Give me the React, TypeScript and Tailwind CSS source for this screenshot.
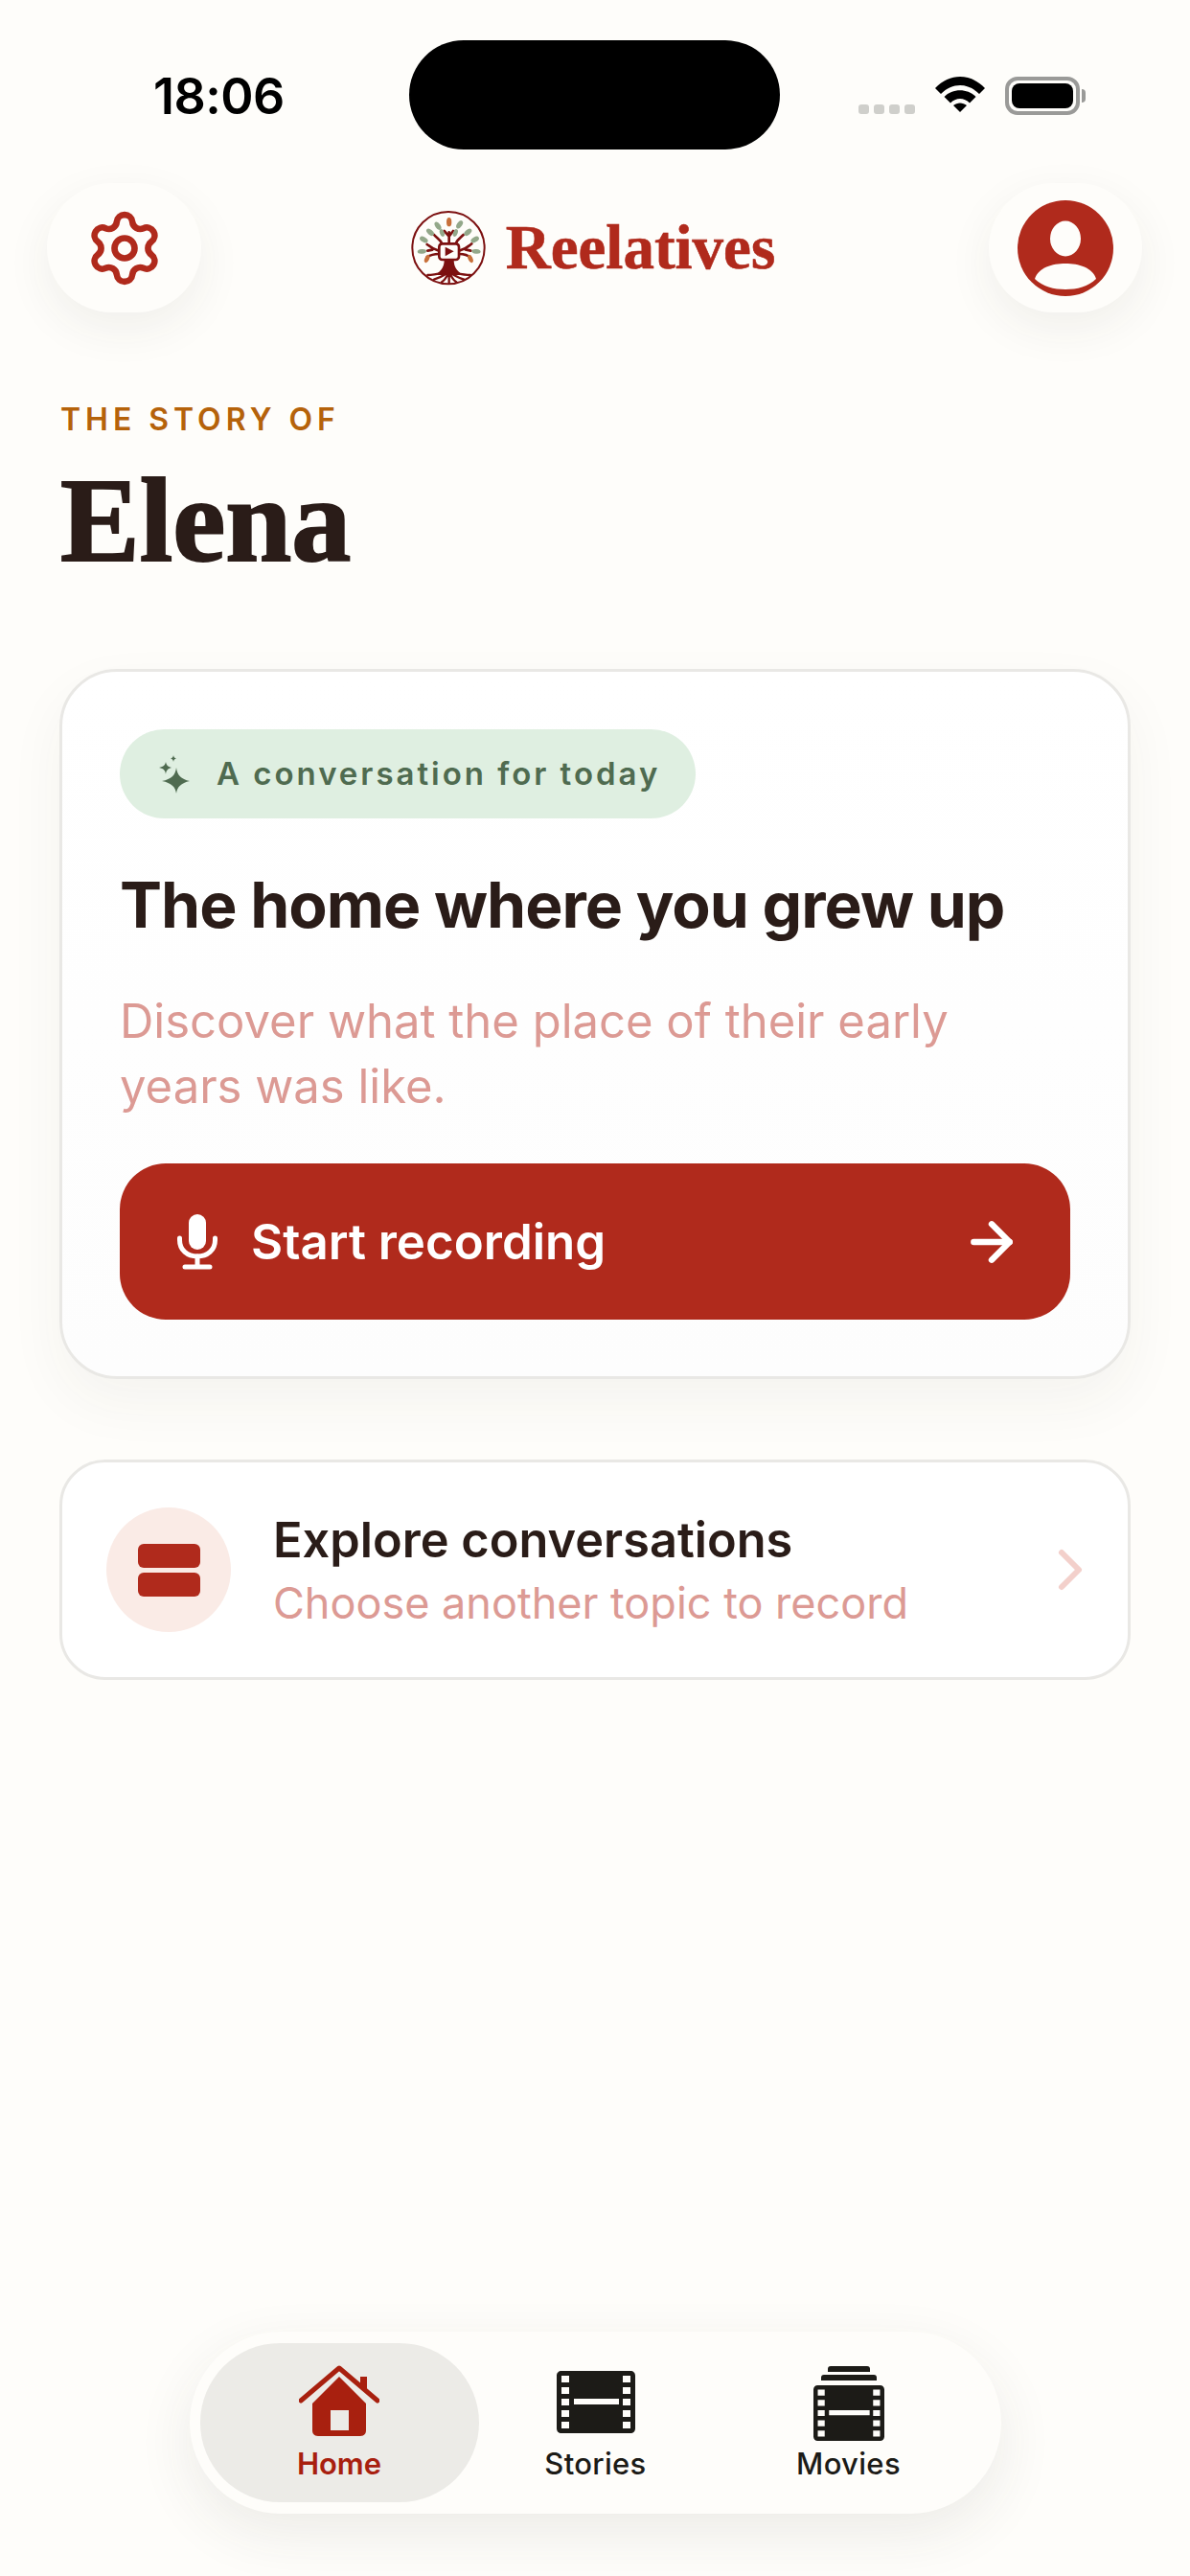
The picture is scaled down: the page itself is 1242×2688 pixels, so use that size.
import React from 'react';
import { ArrowRight, ChevronRight, Settings } from 'lucide-react';

const Logo = () => (
  <svg width="80" height="80" viewBox="25 22 240 240" fill="none">
    <circle cx="145" cy="141" r="113" stroke="#7c1010" strokeWidth="6" />
    {/* branches */}
    <g stroke="#7c1010" strokeWidth="8" strokeLinecap="round">
      <path d="M125 128 C120 115 108 110 100 100" />
      <path d="M168 128 C172 115 182 110 192 100" />
      <path d="M147 128 L147 92 M147 105 L132 88 M147 105 L160 88" />
      <path d="M115 150 C100 145 90 140 78 130 M115 160 C100 160 90 162 78 170 M95 147 L80 150" />
      <path d="M178 150 C195 145 205 140 218 128 M178 160 C195 160 205 162 214 172 M198 146 L215 150" />
    </g>
    <rect x="116" y="128" width="62" height="50" rx="10" fill="#fefdfa" stroke="#7c1010" strokeWidth="8" />
    <path d="M135 138 L135 167 L162 152 Z" fill="#7c1010" />
    {/* trunk and roots */}
    <path d="M132 178 L162 178 C162 200 170 212 190 226 L104 226 C124 212 132 200 132 178 Z" fill="#7c1010" />
    <g stroke="#7c1010" strokeWidth="7" strokeLinecap="round">
      <path d="M132 218 C115 222 100 226 80 226 M162 218 C180 222 195 226 214 226" />
      <path d="M138 222 C125 230 112 236 100 240 M156 222 C170 230 180 236 194 240" />
      <path d="M147 222 L147 250 M143 224 C138 234 132 244 124 248 M151 224 C156 234 162 244 170 248" />
    </g>
    {/* leaves */}
    <g fill="#93a88a">
      <ellipse cx="112" cy="72" rx="8" ry="14" transform="rotate(-35 112 72)" />
      <ellipse cx="180" cy="68" rx="8" ry="14" transform="rotate(35 180 68)" />
      <ellipse cx="88" cy="92" rx="8" ry="14" transform="rotate(-50 88 92)" />
      <ellipse cx="206" cy="92" rx="8" ry="14" transform="rotate(50 206 92)" />
      <ellipse cx="68" cy="115" rx="8" ry="14" transform="rotate(-60 68 115)" />
      <ellipse cx="228" cy="115" rx="8" ry="14" transform="rotate(60 228 115)" />
      <ellipse cx="62" cy="152" rx="7" ry="14" transform="rotate(85 62 152)" />
      <ellipse cx="232" cy="152" rx="7" ry="14" transform="rotate(-85 232 152)" />
      <ellipse cx="125" cy="94" rx="7" ry="12" transform="rotate(-20 125 94)" />
      <ellipse cx="167" cy="94" rx="7" ry="12" transform="rotate(20 167 94)" />
    </g>
    <g fill="#c8703a">
      <ellipse cx="147" cy="60" rx="8" ry="14" />
      <ellipse cx="78" cy="175" rx="7" ry="13" transform="rotate(25 78 175)" />
      <ellipse cx="214" cy="175" rx="7" ry="13" transform="rotate(-25 214 175)" />
    </g>
  </svg>
);

const Avatar = () => (
  <svg width="100" height="100" viewBox="0 0 100 100">
    <circle cx="50" cy="50" r="50" fill="#b02a1c" />
    <ellipse cx="50" cy="40" rx="16" ry="18.500" fill="#fefdfa" />
    <path d="M18 82 C22 70 36 66 50 66 C64 66 78 70 82 82 C74 90 62 93 50 93 C38 93 26 90 18 82 Z" fill="#fefdfa" />
  </svg>
);

const Wifi = () => (
  <svg width="52" height="37" viewBox="0 0 52 37" fill="#000">
    <path d="M0 12 C15 -4 37 -4 52 12 L46 18 C34 6 18 6 6 18 Z" />
    <path d="M9.500 21 C18 12 34 12 42.500 21 L36 27.500 C30.500 21.500 21.500 21.500 16 27.500 Z" />
    <path d="M19 30 C23 26.500 29 26.500 33 30 L26 37 Z" />
  </svg>
);

const Battery = () => (
  <div className="flex items-center gap-[2px]">
    <div className="w-[78px] h-[40px] rounded-[13px] border-[4px] border-[#9a9a98] p-[3px]">
      <div className="w-full h-full rounded-[8px] bg-black" />
    </div>
    <div className="w-[4px] h-[14px] rounded-r-full bg-[#9a9a98]" />
  </div>
);

const Sparkle = () => (
  <svg width="34" height="40" viewBox="0 0 34 40" fill="#4f6b50">
    <path d="M19 13 C20 21 24 25 33 27 C24 29 20 33 19 40 C18 33 14 29 4 27 C14 25 18 21 19 13 Z" />
    <path d="M8 7 C8.500 10 10 12 14 13 C10 14 8.500 16 8 20 C7.500 16 6 14 1 13 C6 12 7.500 10 8 7 Z" />
    <path d="M16 0 C16.300 2 17 3 19 3.500 C17 4 16.300 5 16 7 C15.700 5 15 4 13 3.500 C15 3 15.700 2 16 0 Z" />
  </svg>
);

const Mic = () => (
  <svg width="42" height="58" viewBox="0 0 42 58" fill="none">
    <rect x="12" y="0" width="18" height="37" rx="9" fill="#fff" />
    <path d="M2.500 25 V27 C2.500 37.500 10.500 44 21 44 C31.500 44 39.500 37.500 39.500 27 V25" stroke="#fff" strokeWidth="5" strokeLinecap="round" />
    <path d="M21 44 V54 M8 55 H34" stroke="#fff" strokeWidth="5" strokeLinecap="round" />
  </svg>
);

const HomeIcon = () => (
  <svg width="84" height="74" viewBox="0 0 84 74" fill="#a8200f">
    <path d="M42 12 L70 40 V68 C70 71.500 68 74 64 74 H20 C16 74 14 71.500 14 68 V40 Z M33 47 V68 H52 V47 Z" fillRule="evenodd" />
    <path d="M2 37 L42 3 L82 37" fill="none" stroke="#a8200f" strokeWidth="5" strokeLinecap="round" strokeLinejoin="round" />
    <path d="M64 12 H71 V30 L64 22 Z" />
  </svg>
);

const FilmStrip = ({ w, h }: { w: number; h: number }) => (
  <svg width={w} height={h} viewBox="0 0 82 65" fill="#1c1b17" preserveAspectRatio="none">
    <path
      fillRule="evenodd"
      d="M5 0 H77 C80 0 82 2 82 5 V60 C82 63 80 65 77 65 H5 C2 65 0 63 0 60 V5 C0 2 2 0 5 0 Z
         M5 5 V12 H13 V5 Z M5 17 V24 H13 V17 Z M5 29 V36 H13 V29 Z M5 41 V48 H13 V41 Z M5 53 V60 H13 V53 Z
         M69 5 V12 H77 V5 Z M69 17 V24 H77 V17 Z M69 29 V36 H77 V29 Z M69 41 V48 H77 V41 Z M69 53 V60 H77 V53 Z
         M18 29 V35 H65 V29 Z"
    />
  </svg>
);

const MoviesIcon = () => (
  <div className="flex flex-col items-center gap-[3px]">
    <div className="w-[44px] h-[6px] rounded-t-[3px] bg-[#1c1b17]" />
    <div className="w-[58px] h-[6px] mb-[2px] rounded-t-[3px] bg-[#1c1b17]" />
    <FilmStrip w={74} h={58} />
  </div>
);

export default function App() {
  return (
    <div className="w-[1242px] h-[2688px] flex flex-col bg-[#fefdfa] font-['Inter',sans-serif] text-[#2a1c18] overflow-hidden">
      {/* Status bar */}
      <div className="flex pt-[42px] pl-[160px] pr-[109px] h-[191px]">
        <div className="w-[267px] pt-[29px] text-[52px] leading-[60px] font-semibold tracking-[-0.01em] text-black">18:06</div>
        <div className="w-[387px] h-[114px] rounded-[57px] bg-black" />
        <div className="ml-auto flex items-start gap-[21px] pt-[38px]">
          <div className="flex gap-[5px] pt-[29px]">
            <div className="w-[11px] h-[10px] rounded-[3px] bg-[#cfcfcb]" />
            <div className="w-[11px] h-[10px] rounded-[3px] bg-[#cfcfcb]" />
            <div className="w-[11px] h-[10px] rounded-[3px] bg-[#cfcfcb]" />
            <div className="w-[11px] h-[10px] rounded-[3px] bg-[#cfcfcb]" />
          </div>
          <Wifi />
          <Battery />
        </div>
      </div>

      {/* Header */}
      <div className="flex items-center justify-between pl-[49px] pr-[50px] h-[135px]">
        <button className="w-[161px] h-[135px] rounded-[68px] bg-[#fefdfa] shadow-[0_16px_48px_rgba(60,50,40,0.07)] flex items-center justify-center">
          <Settings size={84} color="#b02a1c" strokeWidth={1.900} />
        </button>
        <div className="flex items-center gap-[20px] ml-[-5px]">
          <Logo />
          <span className="text-[65px] leading-none font-bold text-[#b02a1c] font-['Liberation_Serif',serif] [-webkit-text-stroke:0.6px_#b02a1c]">Reelatives</span>
        </div>
        <button className="w-[160px] h-[135px] rounded-[68px] bg-[#fefdfa] shadow-[0_16px_48px_rgba(60,50,40,0.07)] flex items-center justify-center">
          <Avatar />
        </button>
      </div>

      {/* Title */}
      <div className="pl-[63px] pt-[92px]">
        <div className="text-[32px] leading-[40px] font-semibold tracking-[0.155em] text-[#b5620a]">THE STORY OF</div>
        <h1 className="mt-[24px] text-[124px] leading-[124px] font-bold text-[#2a1c18] font-['Liberation_Serif',serif] [-webkit-text-stroke:2px_#2a1c18]">Elena</h1>
      </div>

      {/* Main card */}
      <div className="mx-[62px] mt-[92px] p-[60px] h-[741px] rounded-[60px] border-[3px] border-[#e9e8e5] bg-gradient-to-b from-white to-[#fdfdfd] shadow-[0_24px_60px_rgba(60,50,40,0.05)]">
        <div className="w-[601px] h-[93px] rounded-[47px] bg-[#dfefe1] flex items-center pl-[40px] gap-[27px]">
          <Sparkle />
          <span className="text-[33px] leading-none font-semibold tracking-[0.09em] text-[#4f6b50] whitespace-nowrap">A conversation for today</span>
        </div>
        <h2 className="mt-[50px] text-[66px] leading-[80px] font-bold tracking-[-0.015em] text-[#2a1c18] whitespace-nowrap">The home where you grew up</h2>
        <p className="mt-[48px] text-[49px] leading-[68px] text-[#dc9a94]">
          Discover what the place of their early<br />years was like.
        </p>
        <button className="mt-[46px] w-full h-[163px] rounded-[48px] bg-[#b02a1c] flex items-center pl-[60px] pr-[50px] text-white">
          <Mic />
          <span className="ml-[35px] text-[51px] leading-none font-semibold">Start recording</span>
          <ArrowRight size={64} strokeWidth={2.400} className="ml-auto" />
        </button>
      </div>

      {/* Explore card */}
      <div className="mx-[62px] mt-[84px] h-[230px] rounded-[48px] border-[3px] border-[#e9e8e5] bg-white flex items-center pl-[46px] pr-[24px]">
        <div className="w-[130px] h-[130px] rounded-full bg-[#faebe6] flex flex-col items-center justify-center gap-[5px] shrink-0">
          <div className="w-[65px] h-[25px] rounded-[6px] bg-[#b02a1c]" />
          <div className="w-[65px] h-[25px] rounded-[6px] bg-[#b02a1c]" />
        </div>
        <div className="ml-[44px]">
          <div className="text-[50.500px] leading-[64px] font-semibold text-[#2a1c18]">Explore conversations</div>
          <div className="mt-[6px] text-[45px] leading-[56px] text-[#dc9a94]">Choose another topic to record</div>
        </div>
        <ChevronRight size={72} strokeWidth={2} color="#f3d0cb" className="ml-auto" />
      </div>

      {/* Bottom nav */}
      <div className="mt-auto mb-[65px] mx-auto w-[847px] h-[190px] rounded-[95px] bg-[#fefdfa] shadow-[0_20px_60px_rgba(60,50,40,0.09)] flex items-center pl-[11px]">
        <div className="w-[291px] h-[166px] rounded-[83px] bg-[#ecebe7] flex flex-col items-center justify-end pb-[22px] gap-[11px] text-[#a8200f]">
          <HomeIcon />
          <span className="text-[31px] leading-[36px] font-semibold">Home</span>
        </div>
        <div className="w-[244px] h-[166px] flex flex-col items-center justify-end pb-[22px] gap-[11px] text-[#1c1b17]">
          <div className="pb-[3px]"><FilmStrip w={82} h={65} /></div>
          <span className="text-[31px] leading-[36px] font-medium tracking-[0.01em]">Stories</span>
        </div>
        <div className="w-[284px] h-[166px] flex flex-col items-center justify-end pb-[22px] gap-[6px] text-[#1c1b17]">
          <MoviesIcon />
          <span className="text-[31px] leading-[36px] font-medium tracking-[0.01em]">Movies</span>
        </div>
      </div>
    </div>
  );
}
